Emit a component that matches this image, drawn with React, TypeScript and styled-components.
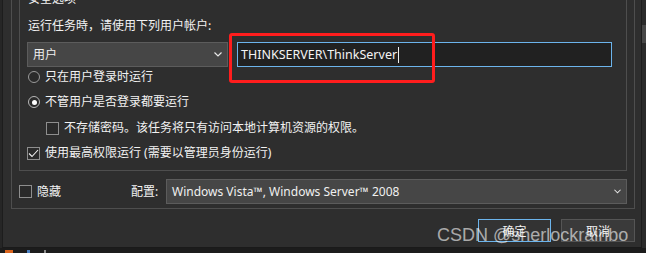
import React from "react";
import styled, { createGlobalStyle } from "styled-components";

const Global = createGlobalStyle`
  html, body { margin: 0; padding: 0; background: #262626; overflow: hidden; }
  body {
    font-family: "Noto Sans", "Noto Sans CJK SC", sans-serif;
    font-size: 12px;
    color: #f2f2f2;
  }
  * { box-sizing: border-box; }
`;

const Screen = styled.div`
  position: relative;
  width: 646px;
  height: 253px;
  overflow: hidden;
  display: flex;
  flex-direction: column;
  background: #262626;
`;

const TopArea = styled.div`
  display: flex;
  flex: none;
  height: 248px;
`;

const Window = styled.div`
  flex: none;
  width: 640px;
  margin: -14px 0 0 2px;
  padding: 2px 0 5px 0;
  background: #2e2e2e;
  border-left: 1px solid #1d1d1d;
  border-right: 1px solid #1d1d1d;
  border-bottom: 1px solid #1a1a1a;
  display: flex;
  flex-direction: column;
`;

const SideStrip = styled.div`
  flex: 1;
  background: #2b2b2b;
  padding-top: 25px;
`;

const ScrollThumb = styled.div`
  height: 18px;
  background: #474747;
`;

const Taskbar = styled.div`
  flex: 1;
  background: #1c1c1c;
  display: flex;
  align-items: flex-end;
  gap: 14px;
  padding-left: 5px;
`;

const TaskIcon = styled.div<{ $color: string; $w: number }>`
  width: ${(p) => p.$w}px;
  height: 3px;
  background: ${(p) => p.$color};
`;

const OuterGroup = styled.div`
  margin-left: 8px;
  width: 624px;
  border: 1px solid #4e4e4e;
  padding: 0 7px 4px 7px;
  display: flex;
  flex-direction: column;
`;

const SecurityGroup = styled.div`
  margin-top: 9px;
  width: 608px;
  border: 1px solid #4e4e4e;
  padding: 0 0 7px 7px;
  display: flex;
  flex-direction: column;
`;

const Legend = styled.div`
  align-self: flex-start;
  margin: -9px 0 0 1px;
  line-height: 16px;
  height: 16px;
  background: #2e2e2e;
  font-family: "Noto Sans CJK SC", sans-serif;
`;

const Caption = styled.div`
  margin: 11px 0 0 1px;
  line-height: 16px;
  height: 16px;
  font-family: "Noto Sans CJK SC", sans-serif;
`;

const AccountRow = styled.div`
  position: relative;
  margin-top: 9px;
  height: 25px;
  display: flex;
  gap: 9px;
`;

const DropDown = styled.div<{ $width?: number }>`
  ${(p) => (p.$width ? `width: ${p.$width}px;` : "flex: 1;")}
  height: 25px;
  background: #464646;
  border: 1px solid #5c5c5c;
  padding: 0 5px 0 5px;
  display: flex;
  align-items: center;
  justify-content: space-between;
  color: #f0f0f0;
  line-height: 16px;
`;

const TextBox = styled.div`
  width: 375px;
  height: 25px;
  background: #212121;
  border: 1px solid #6cb4ec;
  padding-left: 3px;
  display: flex;
  align-items: center;
  color: #f4f4f4;
  font-size: 12.5px;
`;

const Caret = styled.span`
  width: 1px;
  height: 16px;
  margin-left: 1px;
  background: #f0f0f0;
`;

const Highlight = styled.div`
  position: absolute;
  left: 202px;
  top: -9px;
  width: 206px;
  height: 50px;
  border: 3px solid #ff1d1d;
  border-radius: 3px;
  pointer-events: none;
`;

const OptionRow = styled.div<{ $top: number; $indent: number }>`
  margin-top: ${(p) => p.$top}px;
  padding-left: ${(p) => p.$indent}px;
  height: 20px;
  display: flex;
  align-items: center;
  gap: 5px;
  line-height: 16px;
`;

const Radio = styled.span<{ $on?: boolean }>`
  width: 12px;
  height: 12px;
  margin-left: 1px;
  border-radius: 50%;
  border: 1px solid ${(p) => (p.$on ? "#b8b8b8" : "#9a9a9a")};
  background: #2a2a2a;
  display: flex;
  align-items: center;
  justify-content: center;
  &::after {
    content: "";
    display: ${(p) => (p.$on ? "block" : "none")};
    width: 5px;
    height: 5px;
    border-radius: 50%;
    background: #ffffff;
  }
`;

const Box = styled.span`
  width: 13px;
  height: 13px;
  border: 1px solid #8e8e8e;
  background: #2a2a2a;
  display: flex;
  align-items: center;
  justify-content: center;
`;

const ConfigRow = styled.div`
  margin-top: 8px;
  height: 25px;
  display: flex;
  align-items: center;
`;

const HiddenItem = styled.div`
  width: 112px;
  display: flex;
  align-items: center;
  gap: 5px;
  line-height: 16px;
`;

const ConfigLabel = styled.div`
  width: 35px;
  line-height: 16px;
`;

const ButtonRow = styled.div`
  margin-top: 10px;
  padding-right: 6px;
  display: flex;
  justify-content: flex-end;
  gap: 10px;
`;

const Button = styled.div<{ $primary?: boolean; $width: number }>`
  width: ${(p) => p.$width}px;
  height: 23px;
  background: ${(p) => (p.$primary ? "#333333" : "#3a3a3a")};
  border: 1px solid ${(p) => (p.$primary ? "#6cb4ec" : "#555555")};
  display: flex;
  align-items: center;
  justify-content: center;
  line-height: 16px;
  font-family: "Noto Sans CJK SC", sans-serif;
`;

const Watermark = styled.div`
  position: absolute;
  left: 437px;
  top: 226px;
  font-family: "Liberation Sans", Arial, sans-serif;
  font-size: 18px;
  line-height: 18px;
  color: rgba(255, 255, 255, 0.6);
  white-space: nowrap;
  pointer-events: none;
`;

const Chevron = ({ w = 8 }: { w?: number }) => (
  <svg width={w} height={5} viewBox="0 0 8 5" fill="none">
    <polyline points="0.5,0.5 4,4 7.5,0.5" stroke="#e8e8e8" strokeWidth="1.2" />
  </svg>
);

const Check = () => (
  <svg width={11} height={9} viewBox="0 0 11 9" fill="none">
    <polyline points="1,4.5 4,7.5 10,1" stroke="#f2f2f2" strokeWidth="1.1" />
  </svg>
);

export default function App() {
  return (
    <>
      <Global />
      <Screen>
        <TopArea>
          <Window>
            <OuterGroup>
              <SecurityGroup>
                <Legend>安全选项</Legend>
                <Caption>运行任务時，请使用下列用户帐户:</Caption>
                <AccountRow>
                  <DropDown $width={201}>
                    <span>用户</span>
                    <Chevron />
                  </DropDown>
                  <TextBox>
                    THINKSERVER\ThinkServer
                    <Caret />
                  </TextBox>
                  <Highlight />
                </AccountRow>
                <OptionRow $top={0} $indent={0}>
                  <Radio />
                  <span>只在用户登录时运行</span>
                </OptionRow>
                <OptionRow $top={5} $indent={0}>
                  <Radio $on />
                  <span>不管用户是否登录都要运行</span>
                </OptionRow>
                <OptionRow $top={6} $indent={19}>
                  <Box />
                  <span>不存储密码。该任务将只有访问本地计算机资源的权限。</span>
                </OptionRow>
                <OptionRow $top={5} $indent={0}>
                  <Box>
                    <Check />
                  </Box>
                  <span>使用最高权限运行 (需要以管理员身份运行)</span>
                </OptionRow>
              </SecurityGroup>
              <ConfigRow>
                <HiddenItem>
                  <Box />
                  <span>隐藏</span>
                </HiddenItem>
                <ConfigLabel>配置:</ConfigLabel>
                <DropDown>
                  <span>Windows Vista™, Windows Server™ 2008</span>
                  <Chevron w={7} />
                </DropDown>
              </ConfigRow>
            </OuterGroup>
            <ButtonRow>
              <Button $primary $width={73}>确定</Button>
              <Button $width={74}>取消</Button>
            </ButtonRow>
          </Window>
          <SideStrip>
            <ScrollThumb />
          </SideStrip>
        </TopArea>
        <Taskbar>
          <TaskIcon $color="#d9641e" $w={8} />
          <TaskIcon $color="#4a7fc1" $w={3} />
          <TaskIcon $color="#8a8a8a" $w={2} />
        </Taskbar>
        <Watermark>CSDN @sherlockrainbo</Watermark>
      </Screen>
    </>
  );
}
